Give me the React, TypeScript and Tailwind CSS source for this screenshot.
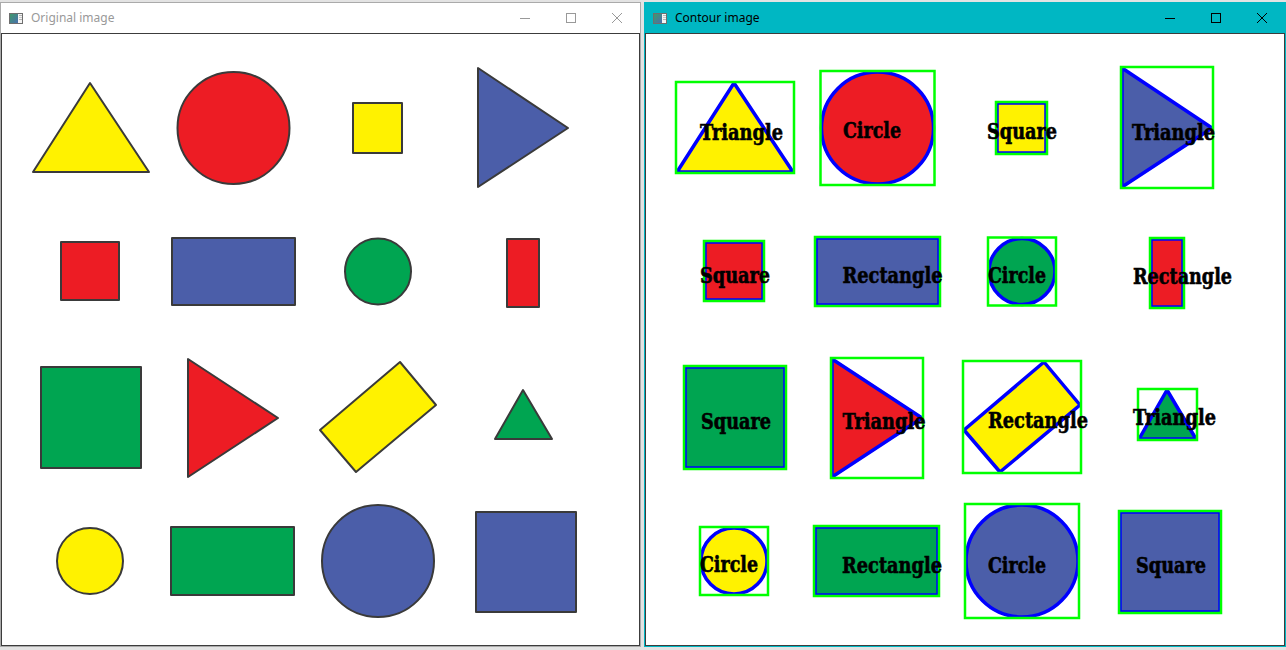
import React from 'react';

type Point = [number, number];

type ShapeItem = {
    kind: 'poly' | 'circle';
    points?: Point[];
    cx?: number;
    cy?: number;
    r?: number;
    fill: string;
    label: string;
    labelX: number;
    labelY: number;
    labelWidth: number;
};

const YELLOW = '#fff200';
const RED = '#ed1c24';
const BLUE = '#4b5ea9';
const GREEN = '#00a551';

const rect = (x1: number, y1: number, x2: number, y2: number): Point[] => [
    [x1, y1],
    [x2, y1],
    [x2, y2],
    [x1, y2],
];

// coordinates are page pixels of the left window, the contour window is shifted by OFFSET
const OFFSET = 644;

const shapes: ShapeItem[] = [
    { kind: 'poly', points: [[33, 172], [90, 83], [149, 172]], fill: YELLOW, label: 'Triangle', labelX: 700, labelY: 140, labelWidth: 83 },
    { kind: 'circle', cx: 233.5, cy: 128, r: 56, fill: RED, label: 'Circle', labelX: 843, labelY: 138, labelWidth: 58 },
    { kind: 'poly', points: rect(353, 103, 402, 153), fill: YELLOW, label: 'Square', labelX: 987, labelY: 139, labelWidth: 70 },
    { kind: 'poly', points: [[478, 68], [478, 187], [568, 128]], fill: BLUE, label: 'Triangle', labelX: 1132, labelY: 140, labelWidth: 83 },

    { kind: 'poly', points: rect(61, 242, 119, 300), fill: RED, label: 'Square', labelX: 700, labelY: 283, labelWidth: 70 },
    { kind: 'poly', points: rect(172, 238, 295, 305), fill: BLUE, label: 'Rectangle', labelX: 842.5, labelY: 283, labelWidth: 100 },
    { kind: 'circle', cx: 378, cy: 271.5, r: 33, fill: GREEN, label: 'Circle', labelX: 988, labelY: 283, labelWidth: 58 },
    { kind: 'poly', points: rect(507, 239, 539, 307), fill: RED, label: 'Rectangle', labelX: 1133, labelY: 284, labelWidth: 99 },

    { kind: 'poly', points: rect(41, 367, 141, 468), fill: GREEN, label: 'Square', labelX: 701, labelY: 429, labelWidth: 70 },
    { kind: 'poly', points: [[188, 359], [188, 477], [278, 418]], fill: RED, label: 'Triangle', labelX: 842.5, labelY: 429, labelWidth: 83 },
    { kind: 'poly', points: [[320, 430], [400, 362], [436, 405], [356, 472]], fill: YELLOW, label: 'Rectangle', labelX: 988, labelY: 428, labelWidth: 100 },
    { kind: 'poly', points: [[495, 439], [523, 390], [552, 439]], fill: GREEN, label: 'Triangle', labelX: 1133, labelY: 425, labelWidth: 83 },

    { kind: 'circle', cx: 90, cy: 561, r: 33, fill: YELLOW, label: 'Circle', labelX: 700, labelY: 572, labelWidth: 58 },
    { kind: 'poly', points: rect(171, 527, 294, 595), fill: GREEN, label: 'Rectangle', labelX: 842, labelY: 572.5, labelWidth: 100 },
    { kind: 'circle', cx: 378, cy: 561, r: 56, fill: BLUE, label: 'Circle', labelX: 988, labelY: 572.5, labelWidth: 58 },
    { kind: 'poly', points: rect(476, 512, 576, 612), fill: BLUE, label: 'Square', labelX: 1136, labelY: 572.5, labelWidth: 70 },
];

const toPoints = (pts: Point[], dx = 0) =>
    pts.map(([x, y]) => `${x + dx},${y}`).join(' ');

const boundsOf = (s: ShapeItem) => {
    if (s.kind === 'circle') {
        const r = s.r ?? 0;
        return { x1: (s.cx ?? 0) - r, y1: (s.cy ?? 0) - r, x2: (s.cx ?? 0) + r, y2: (s.cy ?? 0) + r };
    }
    const xs = (s.points ?? []).map((p) => p[0]);
    const ys = (s.points ?? []).map((p) => p[1]);
    return { x1: Math.min(...xs), y1: Math.min(...ys), x2: Math.max(...xs), y2: Math.max(...ys) };
};

function ShapeFigure({ shape, dx, stroke, strokeWidth }: { shape: ShapeItem; dx: number; stroke: string; strokeWidth: number }) {
    if (shape.kind === 'circle') {
        return (
            <circle
                cx={(shape.cx ?? 0) + dx}
                cy={shape.cy}
                r={shape.r}
                fill={shape.fill}
                stroke={stroke}
                strokeWidth={strokeWidth}
            />
        );
    }
    return (
        <polygon
            points={toPoints(shape.points ?? [], dx)}
            fill={shape.fill}
            stroke={stroke}
            strokeWidth={strokeWidth}
            strokeLinejoin="round"
        />
    );
}

function OriginalCanvas() {
    return (
        <svg width={636} height={611} viewBox="2 34 636 611" className="block bg-white">
            {shapes.map((s, i) => (
                <ShapeFigure key={i} shape={s} dx={0} stroke="#3a3a3a" strokeWidth={2} />
            ))}
        </svg>
    );
}

function ContourCanvas() {
    return (
        <svg width={638} height={611} viewBox="646 34 638 611" className="block bg-white">
            {shapes.map((s, i) => {
                const b = boundsOf(s);
                return (
                    <g key={i}>
                        <ShapeFigure shape={s} dx={OFFSET} stroke="#0000ff" strokeWidth={3.5} />
                        <rect
                            x={b.x1 + OFFSET - 1}
                            y={b.y1 - 1}
                            width={b.x2 - b.x1 + 2}
                            height={b.y2 - b.y1 + 2}
                            fill="none"
                            stroke="#00ff00"
                            strokeWidth={2.5}
                        />
                        <text
                            x={s.labelX}
                            y={s.labelY}
                            textLength={s.labelWidth}
                            lengthAdjust="spacingAndGlyphs"
                            fontFamily="'DejaVu Serif', 'Liberation Serif', serif"
                            fontWeight={700}
                            fontSize={22}
                            fill="#000"
                            stroke="#000"
                            strokeWidth={0.6}
                        >
                            {s.label}
                        </text>
                    </g>
                );
            })}
        </svg>
    );
}

function WindowIcon({ id }: { id: string }) {
    return (
        <svg width="14" height="11" viewBox="0 0 14 11">
            <defs>
                <linearGradient id={id} x1="0" y1="0" x2="1" y2="1">
                    <stop offset="0" stopColor="#3f9a6b" />
                    <stop offset="1" stopColor="#4a6fae" />
                </linearGradient>
            </defs>
            <rect x="0.5" y="0.5" width="13" height="10" fill="#f4f4f4" stroke="#6e6e6e" />
            <rect x="1" y="1" width="8" height="9" fill={`url(#${id})`} />
            <rect x="10" y="2" width="3" height="1" fill="#b5b5b5" />
            <rect x="10" y="4" width="3" height="1" fill="#c8c8c8" />
            <rect x="10" y="6" width="3" height="1" fill="#b5b5b5" />
        </svg>
    );
}

function WindowControls({ color }: { color: string }) {
    return (
        <div className="flex h-full">
            <div className="flex w-[46px] items-center justify-center">
                <svg width="10" height="10" viewBox="0 0 10 10">
                    <line x1="0" y1="5.5" x2="10" y2="5.5" stroke={color} strokeWidth="1" />
                </svg>
            </div>
            <div className="flex w-[46px] items-center justify-center">
                <svg width="10" height="10" viewBox="0 0 10 10">
                    <rect x="0.5" y="0.5" width="9" height="9" fill="none" stroke={color} strokeWidth="1" />
                </svg>
            </div>
            <div className="flex w-[46px] items-center justify-center">
                <svg width="10" height="10" viewBox="0 0 10 10">
                    <line x1="0" y1="0" x2="10" y2="10" stroke={color} strokeWidth="1" />
                    <line x1="10" y1="0" x2="0" y2="10" stroke={color} strokeWidth="1" />
                </svg>
            </div>
        </div>
    );
}

function ImageWindow({
    title,
    active,
    iconId,
    children,
}: {
    title: string;
    active: boolean;
    iconId: string;
    children: React.ReactNode;
}) {
    return (
        <div
            className={
                active
                    ? 'flex h-[645px] w-[642px] flex-col border border-[#00b7c3] bg-[#00b7c3]'
                    : 'flex h-[645px] w-[641px] flex-col border border-[#aaaaaa] bg-white'
            }
        >
            <div className="flex h-[30px] shrink-0 items-center pl-[8px]">
                <WindowIcon id={iconId} />
                <span
                    className={
                        active
                            ? "ml-[8px] font-['Noto_Sans'] text-[12px] text-black"
                            : "ml-[8px] font-['Noto_Sans'] text-[12px] text-[#999999]"
                    }
                >
                    {title}
                </span>
                <div className="ml-auto h-full">
                    <WindowControls color={active ? '#000000' : '#999999'} />
                </div>
            </div>
            <div className="flex-1 overflow-hidden border border-[#3c3c3c] bg-white">{children}</div>
        </div>
    );
}

export default function App() {
    return (
        <div className="flex h-[650px] w-[1286px] items-start overflow-hidden bg-[#e3e3e3] pt-[2px]">
            <ImageWindow title="Original image" active={false} iconId="icon-original">
                <OriginalCanvas />
            </ImageWindow>
            <div className="w-[3px] shrink-0" />
            <ImageWindow title="Contour image" active iconId="icon-contour">
                <ContourCanvas />
            </ImageWindow>
        </div>
    );
}
